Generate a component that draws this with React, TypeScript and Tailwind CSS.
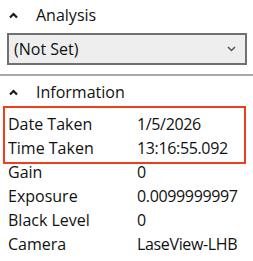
import React from "react";

function ChevronUp() {
  return (
    <svg width="9" height="7" viewBox="0 0 9 7" className="block">
      <polyline points="1,5.5 4.5,2 8,5.5" fill="none" stroke="#1a1a1a" strokeWidth="2.2" />
    </svg>
  );
}

function ChevronDown() {
  return (
    <svg width="9" height="6" viewBox="0 0 9 6" className="block">
      <polyline points="1,1 4.5,4.5 8,1" fill="none" stroke="#555555" strokeWidth="1.5" />
    </svg>
  );
}

const rows: [string, string][] = [
  ["Date Taken", "1/5/2026"],
  ["Time Taken", "13:16:55.092"],
  ["Gain", "0"],
  ["Exposure", "0.0099999997"],
  ["Black Level", "0"],
  ["Camera", "LaseView-LHB"],
];

export default function App() {
  return (
    <div className="w-[253px] h-[261px] bg-white overflow-hidden text-[#111] font-['Open_Sans',sans-serif] text-[16px] leading-[24px]">
      <div className="flex items-center h-[24px] mt-[3px]">
        <div className="w-[36px] flex justify-start pl-[9px]">
          <ChevronUp />
        </div>
        <span>Analysis</span>
      </div>
      <div className="ml-[7px] mt-[6px] w-[240px] h-[32px] border-2 border-[#707070] bg-[#eeeeee] flex items-center justify-between pl-[5px] pr-[9px]">
        <span>(Not Set)</span>
        <ChevronDown />
      </div>
      <div className="mt-[9px] h-[2px] bg-[#a9a9a9]" />
      <div className="flex items-center h-[24px] mt-[4px]">
        <div className="w-[36px] flex justify-start pl-[9px]">
          <ChevronUp />
        </div>
        <span>Information</span>
      </div>
      <div className="relative mt-[8px]">
        {rows.map(([k, v]) => (
          <div key={k} className="flex h-[24px] pl-[8px]">
            <span className="w-[129px] shrink-0 whitespace-nowrap">{k}</span>
            <span className="whitespace-nowrap tracking-[-0.35px]">{v}</span>
          </div>
        ))}
        <div className="absolute left-[3px] top-[-6px] w-[243px] h-[58px] border-2 border-[#f23d1c]" />
      </div>
    </div>
  );
}
